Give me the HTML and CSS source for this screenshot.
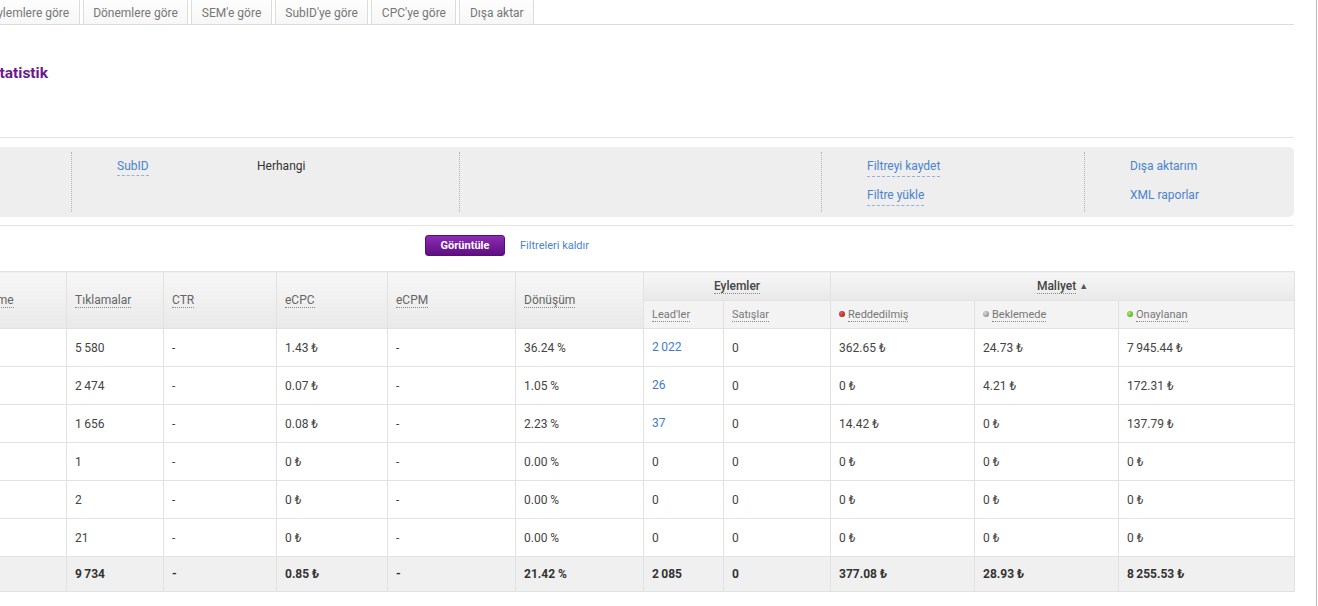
FILE: index.html
```html
<!DOCTYPE html>
<html lang="tr">
<head>
    <meta charset="UTF-8">
    <meta name="viewport" content="width=device-width, initial-scale=1.0">
    <title>İstatistik</title>
    <link rel="stylesheet" href="styles.css">
</head>
<body>
<div class="window">
    <div class="page">
        <ul class="tabs">
            <li class="tab">Eylemlere göre</li>
            <li class="tab">Dönemlere göre</li>
            <li class="tab">SEM'e göre</li>
            <li class="tab">SubID'ye göre</li>
            <li class="tab">CPC'ye göre</li>
            <li class="tab">Dışa aktar</li>
        </ul>

        <h1 class="title">İstatistik</h1>

        <div class="filter-panel">
            <div class="filters">
                <div class="filter-col"></div>
                <div class="filter-col">
                    <div class="filter-row">
                        <span class="filter-label"><a class="dash-link">SubID</a></span>
                        <span class="filter-value">Herhangi</span>
                    </div>
                </div>
                <div class="filter-col"></div>
                <div class="filter-col">
                    <a class="dash-link">Filtreyi kaydet</a>
                    <a class="dash-link">Filtre yükle</a>
                </div>
                <div class="filter-col">
                    <a class="link">Dışa aktarım</a>
                    <a class="link">XML raporlar</a>
                </div>
            </div>
        </div>

        <div class="actions">
            <button class="btn-show">Görüntüle</button>
            <a class="link small">Filtreleri kaldır</a>
        </div>

        <table class="stats">
            <colgroup>
                <col style="width:122px">
                <col style="width:97px">
                <col style="width:113px">
                <col style="width:111px">
                <col style="width:128px">
                <col style="width:128px">
                <col style="width:80px">
                <col style="width:107px">
                <col style="width:144px">
                <col style="width:144px">
                <col style="width:176px">
            </colgroup>
            <thead>
                <tr class="head-top">
                    <th rowspan="2"><span class="sort">Yerleştirme</span></th>
                    <th rowspan="2"><span class="sort">Tıklamalar</span></th>
                    <th rowspan="2"><span class="sort">CTR</span></th>
                    <th rowspan="2"><span class="sort">eCPC</span></th>
                    <th rowspan="2"><span class="sort">eCPM</span></th>
                    <th rowspan="2"><span class="sort">Dönüşüm</span></th>
                    <th colspan="2" class="group"><span class="sort">Eylemler</span></th>
                    <th colspan="3" class="group"><span class="sort">Maliyet</span> <span class="arrow">▲</span></th>
                </tr>
                <tr class="head-sub">
                    <th><span class="sort">Lead'ler</span></th>
                    <th><span class="sort">Satışlar</span></th>
                    <th><i class="dot dot-red"></i><span class="sort">Reddedilmiş</span></th>
                    <th><i class="dot dot-gray"></i><span class="sort">Beklemede</span></th>
                    <th><i class="dot dot-green"></i><span class="sort">Onaylanan</span></th>
                </tr>
            </thead>
            <tbody>
                <tr>
                    <td>web</td><td>5&thinsp;580</td><td>-</td><td>1.43&nbsp;₺</td><td>-</td><td>36.24&nbsp;%</td>
                    <td><a class="link">2&thinsp;022</a></td><td>0</td><td>362.65&nbsp;₺</td><td>24.73&nbsp;₺</td><td>7&thinsp;945.44&nbsp;₺</td>
                </tr>
                <tr>
                    <td>mobil</td><td>2&thinsp;474</td><td>-</td><td>0.07&nbsp;₺</td><td>-</td><td>1.05&nbsp;%</td>
                    <td><a class="link">26</a></td><td>0</td><td>0&nbsp;₺</td><td>4.21&nbsp;₺</td><td>172.31&nbsp;₺</td>
                </tr>
                <tr>
                    <td>app</td><td>1&thinsp;656</td><td>-</td><td>0.08&nbsp;₺</td><td>-</td><td>2.23&nbsp;%</td>
                    <td><a class="link">37</a></td><td>0</td><td>14.42&nbsp;₺</td><td>0&nbsp;₺</td><td>137.79&nbsp;₺</td>
                </tr>
                <tr>
                    <td>tv</td><td>1</td><td>-</td><td>0&nbsp;₺</td><td>-</td><td>0.00&nbsp;%</td>
                    <td>0</td><td>0</td><td>0&nbsp;₺</td><td>0&nbsp;₺</td><td>0&nbsp;₺</td>
                </tr>
                <tr>
                    <td>push</td><td>2</td><td>-</td><td>0&nbsp;₺</td><td>-</td><td>0.00&nbsp;%</td>
                    <td>0</td><td>0</td><td>0&nbsp;₺</td><td>0&nbsp;₺</td><td>0&nbsp;₺</td>
                </tr>
                <tr>
                    <td>pop</td><td>21</td><td>-</td><td>0&nbsp;₺</td><td>-</td><td>0.00&nbsp;%</td>
                    <td>0</td><td>0</td><td>0&nbsp;₺</td><td>0&nbsp;₺</td><td>0&nbsp;₺</td>
                </tr>
            </tbody>
            <tfoot>
                <tr>
                    <td>Toplam</td><td>9&thinsp;734</td><td>-</td><td>0.85&nbsp;₺</td><td>-</td><td>21.42&nbsp;%</td>
                    <td>2&thinsp;085</td><td>0</td><td>377.08&nbsp;₺</td><td>28.93&nbsp;₺</td><td>8&thinsp;255.53&nbsp;₺</td>
                </tr>
            </tfoot>
        </table>
    </div>
</div>
</body>
</html>
```

FILE: styles.css
```css
:root {
    --purple: #6b1a8e;
    --link: #4a84cc;
    --line: #e4e4e4;
    --text: #444;
}

html, body {
    margin: 0;
    background: #fff;
}

body {
    font-family: Roboto, "Liberation Sans", sans-serif;
    font-size: 12px;
    color: var(--text);
    overflow: hidden;
}

.window {
    width: 1316px;
    height: 606px;
    border-right: 1px solid #b9b9b9;
    overflow: hidden;
}

/* page is scrolled a bit, so its left edge is outside the window */
.page {
    width: 1350px;
    margin-left: -56px;
}

/* tabs */
.tabs {
    display: flex;
    gap: 3px;
    list-style: none;
    margin: -6px 0 0;
    padding: 0 0 0 36px;
    border-bottom: 1px solid #dcdcdc;
}

.tab {
    padding: 11px 9.5px 4px;
    line-height: 14px;
    color: #777;
    background: linear-gradient(#fff, #f7f7f7);
    border: 1px solid #dcdcdc;
    border-bottom: none;
    border-radius: 4px 4px 0 0;
}

.title {
    margin: 38px 0 54px;
    padding-left: 43px;
    font-size: 15.5px;
    line-height: 20px;
    color: var(--purple);
}

/* filters */
.filter-panel {
    border-top: 1px solid var(--line);
    border-bottom: 1px solid var(--line);
    padding: 9px 0 8px;
}

.filters {
    display: grid;
    grid-template-columns: 127px 388px 362px 263px 1fr;
    height: 70px;
    background: #eeeeee;
    border-radius: 5px;
}

.filter-col {
    display: flex;
    flex-direction: column;
    align-items: flex-start;
    gap: 11px;
    margin: 5px 0;
    padding: 7px 0 0 45px;
    border-left: 1px dotted #b3b3b3;
}

.filter-col:first-child {
    border-left: none;
}

.filter-row {
    display: flex;
}

.filter-label {
    width: 140px;
}

.filter-value {
    line-height: 15px;
    color: #333;
}

.link,
.dash-link {
    color: var(--link);
    line-height: 15px;
    text-decoration: none;
    cursor: pointer;
}

.dash-link {
    padding-bottom: 2px;
    border-bottom: 1px dashed #93b3df;
}

.filter-col .link {
    padding-bottom: 3px;
}

.link.small {
    font-size: 11px;
}

/* actions */
.actions {
    display: flex;
    align-items: center;
    gap: 15px;
    padding: 9px 0 0 481px;
    margin-bottom: 15px;
}

.btn-show {
    width: 80px;
    height: 21px;
    padding: 0;
    font-family: inherit;
    font-size: 11px;
    font-weight: bold;
    color: #fff;
    background: linear-gradient(#8b2cb3, #5f0f82);
    border: 1px solid #5a0c7c;
    border-radius: 3px;
    cursor: pointer;
}

/* table */
.stats {
    width: 1350px;
    table-layout: fixed;
    border-collapse: collapse;
}

.stats th,
.stats td {
    border: 1px solid #e2e2e2;
    padding: 0 8px;
    text-align: left;
    white-space: nowrap;
    overflow: hidden;
}

.stats th {
    font-weight: normal;
    color: #666;
    background: linear-gradient(#f7f7f7, #e9e9e9);
}

.head-top {
    height: 29px;
}

.head-sub {
    height: 28px;
}

.head-sub th {
    font-size: 11px;
    color: #777;
    background: #f3f3f3;
}

.stats th.group {
    text-align: center;
    color: #444;
    font-weight: 500;
}

.sort {
    border-bottom: 1px dotted #888;
}

.arrow {
    font-size: 9px;
    color: #555;
    vertical-align: 1px;
}

.dot {
    display: inline-block;
    width: 6px;
    height: 6px;
    margin-right: 3px;
    border-radius: 50%;
    vertical-align: 1px;
}

.dot-red {
    background: radial-gradient(circle at 35% 35%, #e06060, #9c0d0d);
}

.dot-gray {
    background: radial-gradient(circle at 35% 35%, #d8d8d8, #7a7a7a);
}

.dot-green {
    background: radial-gradient(circle at 35% 35%, #a6ea6a, #3c9b0b);
}

.stats tbody tr {
    height: 38px;
}

.stats td {
    color: #444;
}

.stats td .link {
    color: #3f7bcc;
}

.stats tfoot tr {
    height: 35px;
}

.stats tfoot td {
    font-weight: bold;
    color: #333;
    background: #f0f0f0;
}
```
